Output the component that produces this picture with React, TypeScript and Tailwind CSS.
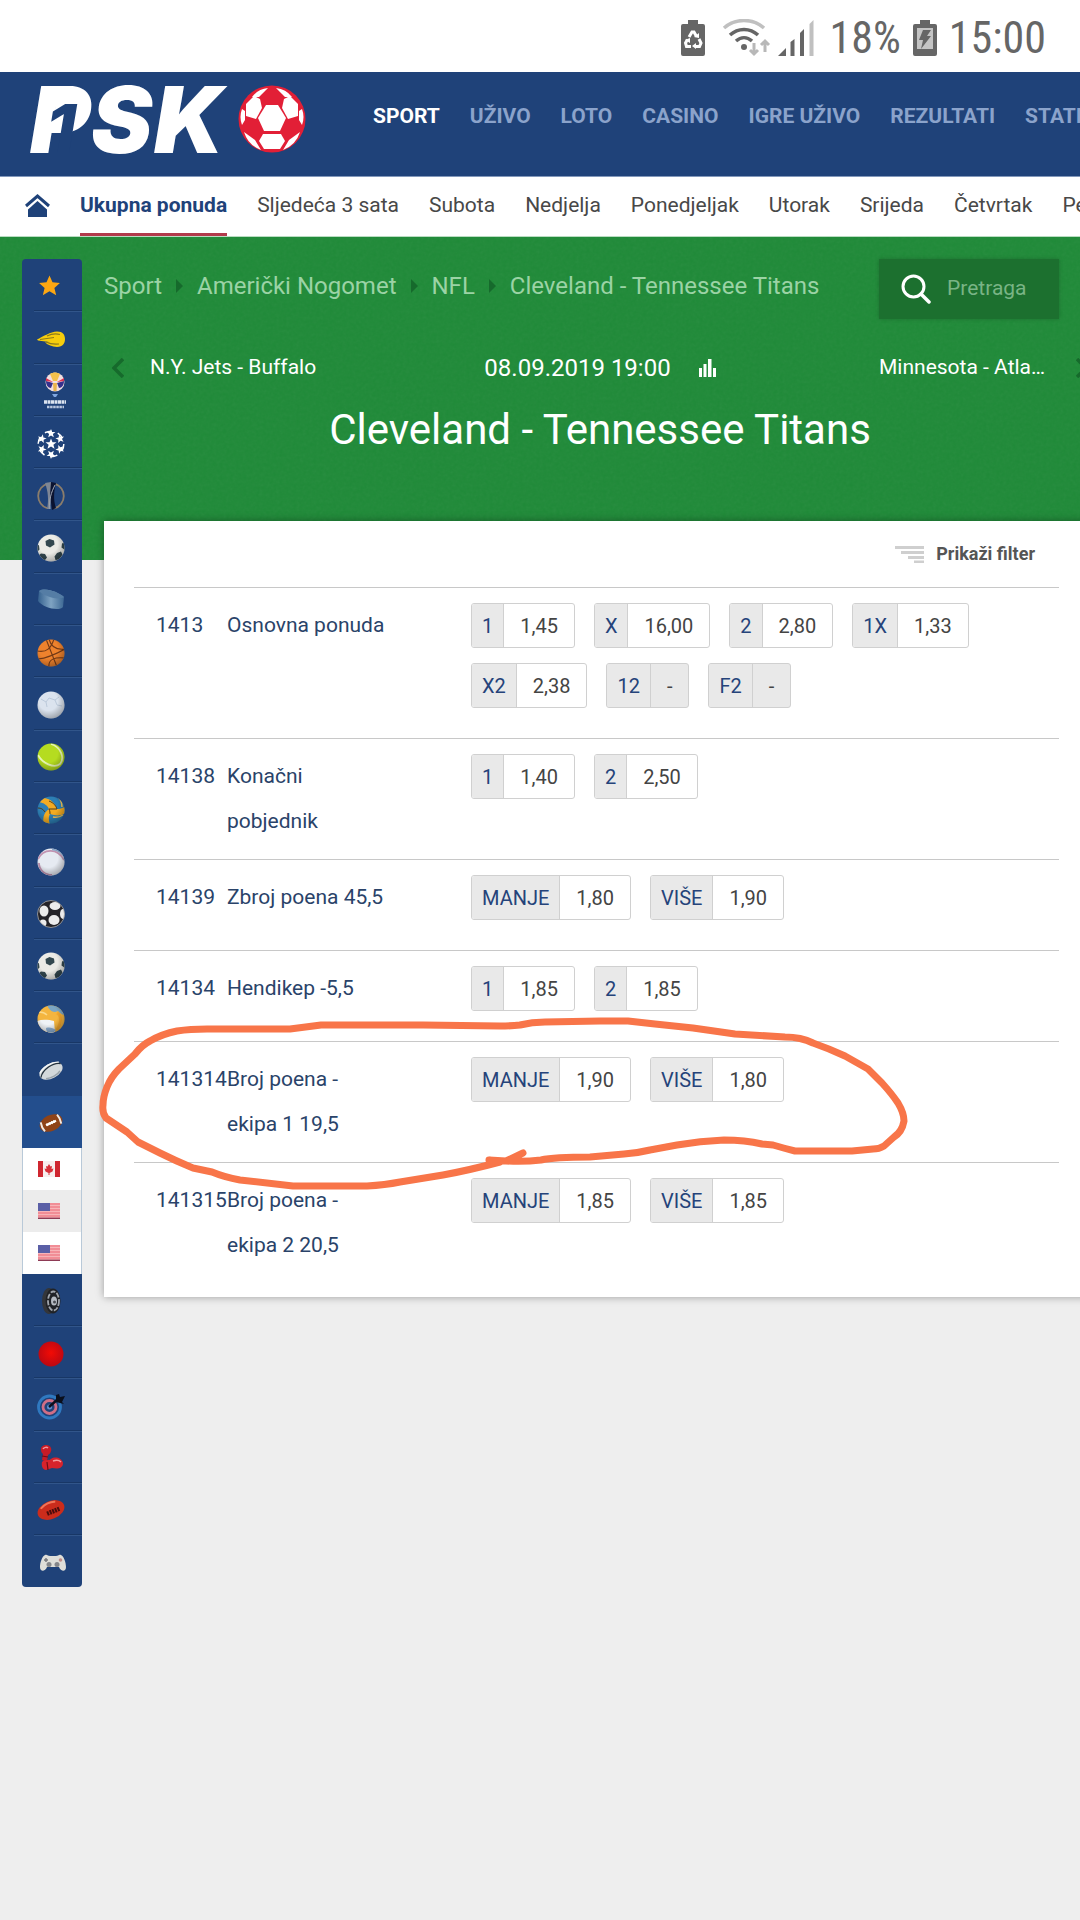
import type { ReactNode } from 'react';
import clsx from 'clsx';

const mainNav = ['SPORT', 'UŽIVO', 'LOTO', 'CASINO', 'IGRE UŽIVO', 'REZULTATI', 'STATISTIKA'];

const dayNav = ['Ukupna ponuda', 'Sljedeća 3 sata', 'Subota', 'Nedjelja', 'Ponedjeljak', 'Utorak', 'Srijeda', 'Četvrtak', 'Petak'];

const crumbs = ['Sport', 'Američki Nogomet', 'NFL', 'Cleveland - Tennessee Titans'];

type Odd = { tip: string; value: string };
type Market = { code: string; name: string; odds: Odd[] };

const markets: Market[] = [
  {
    code: '1413',
    name: 'Osnovna ponuda',
    odds: [
      { tip: '1', value: '1,45' },
      { tip: 'X', value: '16,00' },
      { tip: '2', value: '2,80' },
      { tip: '1X', value: '1,33' },
      { tip: 'X2', value: '2,38' },
      { tip: '12', value: '-' },
      { tip: 'F2', value: '-' },
    ],
  },
  { code: '14138', name: 'Konačni pobjednik', odds: [{ tip: '1', value: '1,40' }, { tip: '2', value: '2,50' }] },
  { code: '14139', name: 'Zbroj poena 45,5', odds: [{ tip: 'MANJE', value: '1,80' }, { tip: 'VIŠE', value: '1,90' }] },
  { code: '14134', name: 'Hendikep -5,5', odds: [{ tip: '1', value: '1,85' }, { tip: '2', value: '1,85' }] },
  { code: '141314', name: 'Broj poena - ekipa 1 19,5', odds: [{ tip: 'MANJE', value: '1,90' }, { tip: 'VIŠE', value: '1,80' }] },
  { code: '141315', name: 'Broj poena - ekipa 2 20,5', odds: [{ tip: 'MANJE', value: '1,85' }, { tip: 'VIŠE', value: '1,85' }] },
];

const Icon = ({ children }: { children: ReactNode }) => (
  <svg viewBox="0 0 28 28" className="h-7 w-7 overflow-visible" aria-hidden="true">{children}</svg>
);

const Gradients = () => (
  <svg className="absolute h-0 w-0" aria-hidden="true">
    <defs>
      <radialGradient id="shade" cx="0.4" cy="0.35" r="0.7">
        <stop offset="0.5" stopColor="#000" stopOpacity="0" />
        <stop offset="1" stopColor="#000" stopOpacity="0.3" />
      </radialGradient>
      <linearGradient id="puck" x1="0" x2="1">
        <stop offset="0" stopColor="#35618f" />
        <stop offset="0.5" stopColor="#7fa3c2" />
        <stop offset="1" stopColor="#3d6894" />
      </linearGradient>
      <radialGradient id="red" cx="0.5" cy="0.45" r="0.55">
        <stop offset="0" stopColor="#f30b05" />
        <stop offset="1" stopColor="#bb0812" />
      </radialGradient>
      <clipPath id="ballClip"><circle cx="14" cy="14" r="13.5" /></clipPath>
    </defs>
  </svg>
);

const StarIcon = () => (
  <Icon><path d="M12.500 3.500l3 6.700 7.400.700-5.500 5 1.800 7.300-6.700-3.900-6.700 3.900 1.800-7.300-5.500-5 7.400-.700z" fill="#fda712" /></Icon>
);

const CometIcon = () => (
  <Icon>
    <path d="M0 14.500C7 11 13 7 20 6.500c6 0 8 3.500 8 7.500s-2 8-8 8c-5-.5-9-2-12-4.500l4-.5L1 15.500z" fill="#f7cd0c" />
    <path d="M3 14.500l14-2M9 17c4 2 8 2.500 13 2M10 11c4-2 9-2.500 13-1.500" stroke="#8c7a1c" strokeWidth="1.200" fill="none" />
  </Icon>
);

const WorldCupIcon = () => (
  <svg viewBox="0 0 28 38" className="ml-1 h-[38px] w-7" aria-hidden="true">
    <circle cx="14" cy="10" r="9.500" fill="#f3dfe0" />
    <path d="M9 2c3-2 7-2 10 0l-3 7h-4z" fill="#f3c14b" />
    <path d="M5 9l7 2-2 5c-3 0-5-3-5-7zM23 9l-7 2 2 5c3 0 5-3 5-7z" fill="#36318c" />
    <path d="M5 6l7 4-7-1zM23 6l-7 4 7-1z" fill="#dc3452" />
    <path d="M12 11h4l-.5 8h-3z" fill="#eab44b" />
    <path d="M11 22h6l-2 3h-2z" fill="#7fa6e0" />
    <path d="M3 30h22" stroke="#dbe3f0" strokeWidth="3.500" strokeDasharray="3 .5" />
    <path d="M6 35h17" stroke="#b8c6de" strokeWidth="2.500" strokeDasharray="2.500 .6" />
  </svg>
);

const starPath = 'M0-4.500l1.200 3 3.200.100-2.500 2 .9 3.200L0 2l-2.800 1.800.9-3.200-2.500-2 3.200-.100z';

const ChampionsIcon = () => (
  <Icon>
    <g fill="#fff">
      <path d={starPath} transform="translate(14 14) scale(1.250)" />
      {[0, 60, 120, 180, 240, 300].map((a) => (
        <path key={a} d={starPath} transform={`rotate(${a} 14 14) translate(14 3.500)`} />
      ))}
    </g>
    <circle cx="14" cy="14" r="12.800" fill="none" stroke="#fff" strokeWidth="1.500" strokeDasharray="6.700 6.700" />
  </Icon>
);

const EuropaIcon = () => (
  <Icon>
    <circle cx="14" cy="14" r="12.800" fill="none" stroke="#8b7d6b" strokeWidth="1.800" strokeDasharray="33 7.200" strokeDashoffset="-24" />
    <path d="M8 1l6-1v13l-1 14h-3c2-9 1-18-2-26z" fill="#7d8695" />
    <path d="M14 0l5 1c-2 8-3 16 0 25l-4 2-2-15z" fill="#0b1330" />
    <path d="M18 3c-4 8-6 14-5 24" stroke="#a5acb8" fill="none" />
  </Icon>
);

const FootballIcon = () => (
  <Icon>
    <circle cx="14" cy="14" r="13.500" fill="#ebebe6" />
    <g clipPath="url(#ballClip)" fill="#33484f">
      <path d="M8.500 7l4-2 4.500 1.500.500 4-4.500 3-4-2z" />
      <path d="M0 10l2 1.500.500 4L0 18zM28 8l-3 1.500-.5 4L28 16zM4 19.500l4 .5 2 3.500L8 26H4l-3-4zM20 19l4-1.500 1.500 3-3 5-4 .5-1-3.500z" />
    </g>
    <circle cx="14" cy="14" r="13.500" fill="url(#shade)" />
  </Icon>
);

const PuckIcon = () => (
  <Icon>
    <path d="M2 5c6-4 19 1 25 6l-1 10c-4 5-21 0-25-6z" fill="url(#puck)" />
    <path d="M2 5c6-4 19 1 25 6-7 4-20-1-25-6z" fill="#557da5" />
  </Icon>
);

const BasketballIcon = () => (
  <Icon>
    <circle cx="14" cy="14" r="13.500" fill="#ee822d" />
    <g clipPath="url(#ballClip)" fill="none" stroke="#733a17" strokeWidth="1.100">
      <path d="M9 0l11 28M0 12c10 2 14-3 17-12M1 20c10-1 18-5 27-10M12 28c-1-8 6-10 16-9M12 0C14 8 20 11 28 10" />
    </g>
    <circle cx="14" cy="14" r="13.500" fill="url(#shade)" />
  </Icon>
);

const HandballIcon = () => (
  <Icon>
    <circle cx="14" cy="14" r="13.500" fill="#dbe3ee" />
    <path d="M4 8l5 3 3-4 6 2 4-3M9 11l1 5M18 9l2 5 5 1" stroke="#bccadb" fill="none" />
    <circle cx="14" cy="14" r="13.500" fill="url(#shade)" />
  </Icon>
);

const TennisIcon = () => (
  <Icon>
    <circle cx="14" cy="14" r="13.500" fill="#b5dc20" />
    <g clipPath="url(#ballClip)" fill="none" stroke="#e8f6b5" strokeWidth="1.800">
      <path d="M14 1c10 3 14 14 9 20-6 5-18-1-22-9" />
    </g>
    <circle cx="14" cy="14" r="13.500" fill="url(#shade)" />
  </Icon>
);

const VolleyballIcon = () => (
  <Icon>
    <circle cx="14" cy="14" r="13.500" fill="#2d7fb4" />
    <g clipPath="url(#ballClip)">
      <path d="M7 2C14 3 18 7 20 13c3 0 6-1 9-3v7c-5 3-10 3-16 1-2 4-1 7 0 11H7c-2-7 0-13 5-16C10 9 7 7 2 6z" fill="#f2ab22" />
      <path d="M12 13c3 0 5 0 8 0M12 13c1 2 1 4 1 5M12 5C17 7 19 10 20 13M1 12c3 0 5 1 7 4" fill="none" stroke="#503c1b" />
      <path d="M21 1c3 3 4 6 4 10M16 21c4 1 7 0 10-2" fill="none" stroke="#f5c355" strokeWidth="1.500" />
    </g>
    <circle cx="14" cy="14" r="13.500" fill="url(#shade)" />
  </Icon>
);

const BaseballIcon = () => (
  <Icon>
    <circle cx="14" cy="14" r="13.500" fill="#e6eaf2" />
    <g clipPath="url(#ballClip)" fill="none">
      <path d="M1 11C6 1 20-1 27 12M2 15c0 7 6 12 13 12" stroke="#c193b1" strokeWidth="1.800" />
      <path d="M15 1c6 0 12 4 13 10" stroke="#8ba6c8" strokeWidth="2.500" />
    </g>
    <circle cx="14" cy="14" r="13.500" fill="url(#shade)" />
  </Icon>
);

const FutsalIcon = () => (
  <Icon>
    <circle cx="14" cy="14" r="13.500" fill="#242328" />
    <g clipPath="url(#ballClip)" fill="#ececec">
      <ellipse cx="18" cy="6" rx="5.500" ry="4" />
      <ellipse cx="7" cy="11" rx="4.500" ry="5.500" />
      <ellipse cx="17" cy="20" rx="5.500" ry="5" />
      <ellipse cx="26" cy="14" rx="3" ry="5" />
      <ellipse cx="6" cy="23" rx="3.500" ry="3.500" />
    </g>
    <circle cx="14" cy="14" r="13.500" fill="none" stroke="#a9a9a9" strokeWidth="0.800" />
  </Icon>
);

const BeachVolleyIcon = () => (
  <Icon>
    <circle cx="14" cy="14" r="13.500" fill="#f4b53f" />
    <g clipPath="url(#ballClip)">
      <path d="M10 0h18v10c-3 0-5-2-7-4-4 2-8 1-11-6z" fill="#7ba6c4" />
      <path d="M0 16c6-2 12-1 17 0l1 12H4z" fill="#eff3f7" />
      <path d="M9 23c4-1 7 0 10 2l-4 4c-4 0-6-3-6-6z" fill="#8fb2d6" />
      <path d="M20 8c5 3 4 10 0 17" fill="none" stroke="#f0a52c" strokeWidth="3" />
      <path d="M2 7c3 0 6 1 8 3" fill="none" stroke="#fbd98a" strokeWidth="1.500" />
    </g>
    <circle cx="14" cy="14" r="13.500" fill="url(#shade)" />
  </Icon>
);

const RugbyIcon = () => (
  <Icon>
    <g transform="rotate(-28 14 14)">
      <ellipse cx="14" cy="14" rx="12.500" ry="7.500" fill="#d3d8db" />
      <path d="M3 11c5-4 16-5 22-1" stroke="#f4f6f7" strokeWidth="1.500" fill="none" />
      <path d="M2 15c5-6 18-8 24-3" stroke="#24313c" strokeWidth="1.300" fill="none" />
      <path d="M6 18.500c5 2 12 2 16-.5" stroke="#9aa3aa" strokeWidth="1.500" fill="none" />
    </g>
  </Icon>
);

const AmericanIcon = () => (
  <Icon>
    <g transform="rotate(-25 14 14)">
      <ellipse cx="14" cy="14" rx="12" ry="8" fill="#8f4318" />
      <path d="M5 9q-1.500 5 0 10M23 9q1.500 5 0 10" stroke="#f1e9e2" strokeWidth="2" fill="none" />
      <path d="M8.500 14h11" stroke="#fff" strokeWidth="2.200" />
      <path d="M10 12.500v3M12.500 12.500v3M15 12.500v3M17.500 12.500v3" stroke="#fff" strokeWidth="1" />
    </g>
  </Icon>
);

const TyreIcon = () => (
  <Icon>
    <ellipse cx="12" cy="14" rx="7" ry="13" fill="#34363a" />
    <ellipse cx="16" cy="14" rx="7.500" ry="12.500" fill="#202226" />
    <ellipse cx="16.500" cy="14" rx="5.500" ry="9.500" fill="none" stroke="#a1a6ad" strokeWidth="1.800" strokeDasharray="5 1.500" />
    <ellipse cx="17" cy="14" rx="3" ry="4.500" fill="#b6bbc2" />
    <circle cx="17.500" cy="15" r="1.500" fill="#4a4d52" />
  </Icon>
);

const RedBallIcon = () => (
  <Icon><circle cx="14" cy="14" r="12.500" fill="url(#red)" /></Icon>
);

const DartsIcon = () => (
  <Icon>
    <circle cx="12.500" cy="15" r="11" fill="none" stroke="#2f79c0" strokeWidth="2.800" />
    <circle cx="12.500" cy="15" r="6.500" fill="none" stroke="#cf6e86" strokeWidth="2.800" />
    <circle cx="12.500" cy="15" r="2.500" fill="#5f8fd0" />
    <path d="M12 15l9-8" stroke="#0a0f1c" strokeWidth="2.500" />
    <path d="M19 3l3-1 1 3 5-1-3 6 2 2-8-2z" fill="#0a0f1c" />
  </Icon>
);

const BoxingIcon = () => (
  <Icon>
    <path d="M4 6c-1-5 8-7 10-2 1 3-1 6-3 7l-1 7-5-2 1-6c-1-1-2-2-2-4z" fill="#c81b26" />
    <path d="M5 18c3-3 7-1 9-3 4-3 11-1 12 4 0 6-6 6-11 5l-6 2c-3 0-5-4-4-8z" fill="#d7232c" />
    <path d="M6 5c1-2 4-2 5-1M16 17c3-1 6-1 8 1" stroke="#f49a9c" fill="none" strokeWidth="1.500" />
    <path d="M10 18l1 8M5 12l6 1" stroke="#6c0d16" fill="none" strokeWidth="1.200" />
  </Icon>
);

const AussieIcon = () => (
  <Icon>
    <g transform="rotate(-22 14 14)">
      <ellipse cx="14" cy="14" rx="14" ry="9" fill="#cb2c1c" />
      <path d="M5 9c5-3 12-3 16-1" stroke="#f07558" strokeWidth="2" fill="none" />
      <path d="M9 16h14" stroke="#4b0c0c" strokeWidth="4.500" strokeDasharray="2 .8" />
    </g>
  </Icon>
);

const GamepadIcon = () => (
  <Icon>
    <g transform="translate(2 1)">
      <path d="M6 6c2-1 3 1 5 1h6c2 0 3-2 5-1 3 1 5 8 5 12 0 5-5 5-7 0H8c-2 5-7 5-7 0C1 14 3 7 6 6z" fill="#deded9" />
      <circle cx="10" cy="15.500" r="2.500" fill="#84868a" />
      <circle cx="18" cy="15.500" r="2.500" fill="#84868a" />
      <path d="M5 11h4M7 9v4" stroke="#77797e" strokeWidth="1.500" />
      <circle cx="21.500" cy="11" r="1.800" fill="#c08c87" />
    </g>
  </Icon>
);

const CanadaFlag = () => (
  <svg viewBox="0 0 22 16" className="h-4 w-[22px]" aria-hidden="true">
    <path d="M0 0h22v16H0z" fill="#f7eeee" />
    <path d="M0 0h5v16H0zM17 0h5v16h-5z" fill="#cf2630" />
    <path d="M11 3l1.500 2.500 1.500-.5-.5 3 2-.5-1 3-3 1.500V14h-1v-2L7.500 10.500l-1-3 2 .5-.5-3 1.500.5z" fill="#d8303a" />
  </svg>
);

const UsaFlag = () => (
  <svg viewBox="0 0 22 16" className="h-4 w-[22px]" aria-hidden="true">
    <path d="M0 0h22v16H0z" fill="#f7b4b8" />
    <path d="M0 1h22M0 4h22M0 7h22M0 10h22M0 13h22" stroke="#f0808a" strokeWidth="1.400" />
    <path d="M0 15.300h22" stroke="#8d3a55" strokeWidth="1.400" />
    <path d="M0 0h12v8H0z" fill="#5a5fa6" />
  </svg>
);

const topSports = [
  { name: 'Favoriti', icon: <StarIcon /> },
  { name: 'Specijali', icon: <CometIcon /> },
  { name: 'FIBA World Cup', icon: <WorldCupIcon /> },
  { name: 'Liga prvaka', icon: <ChampionsIcon /> },
  { name: 'Europska liga', icon: <EuropaIcon /> },
  { name: 'Nogomet', icon: <FootballIcon /> },
  { name: 'Hokej', icon: <PuckIcon /> },
  { name: 'Košarka', icon: <BasketballIcon /> },
  { name: 'Rukomet', icon: <HandballIcon /> },
  { name: 'Tenis', icon: <TennisIcon /> },
  { name: 'Odbojka', icon: <VolleyballIcon /> },
  { name: 'Baseball', icon: <BaseballIcon /> },
  { name: 'Futsal', icon: <FutsalIcon /> },
  { name: 'Mali nogomet', icon: <FootballIcon /> },
  { name: 'Odbojka na pijesku', icon: <BeachVolleyIcon /> },
  { name: 'Ragbi', icon: <RugbyIcon /> },
  { name: 'Američki Nogomet', icon: <AmericanIcon />, active: true },
];

const leagues = [
  { name: 'CFL', icon: <CanadaFlag /> },
  { name: 'NFL', icon: <UsaFlag />, active: true },
  { name: 'NCAA', icon: <UsaFlag /> },
];

const bottomSports = [
  { name: 'Auto moto', icon: <TyreIcon /> },
  { name: 'Snooker', icon: <RedBallIcon /> },
  { name: 'Pikado', icon: <DartsIcon /> },
  { name: 'Boks', icon: <BoxingIcon /> },
  { name: 'Australski nogomet', icon: <AussieIcon /> },
  { name: 'E-Sport', icon: <GamepadIcon /> },
];

const SportLink = ({ name, icon, active, first }: { name: string; icon: ReactNode; active?: boolean; first?: boolean }) => (
  <a href="#" aria-label={name} className={clsx('flex', active ? 'bg-[#234e8d]' : 'pl-3')}>
    <span
      className={clsx(
        'flex flex-1 items-center pt-0.5',
        active ? 'pl-[15px]' : 'pl-[3px]',
        !first && !active && 'border-t border-[#31558a] shadow-[0_-1px_0_#183766]'
      )}
    >
      {icon}
    </span>
  </a>
);

const Sidebar = () => (
  <nav aria-label="Sportovi" className="w-[60px] shrink-0 self-start overflow-hidden rounded-[4px] bg-[#1f4279]">
    <div className="grid h-[889px] auto-rows-fr">
      {topSports.map((s, i) => <SportLink key={s.name} {...s} first={i === 0} />)}
    </div>
    {leagues.map((l) => (
      <a key={l.name} href="#" aria-label={l.name} className={clsx('flex h-[42px] items-center border-x border-[#b9c9d8] pl-[15px]', l.active ? 'bg-[#ececec]' : 'bg-white')}>
        {l.icon}
      </a>
    ))}
    <div className="grid h-[313px] auto-rows-fr">
      {bottomSports.map((s, i) => <SportLink key={s.name} {...s} first={i === 0} />)}
    </div>
  </nav>
);

const StatusBar = () => (
  <div className="flex h-[72px] items-center justify-end bg-white pt-1 pr-[34px] text-[#666]">
    <svg viewBox="0 0 24 36" className="h-9 w-6" aria-hidden="true">
      <path d="M7 0h10v4h5q2 0 2 2v28q0 2-2 2H2q-2 0-2-2V6q0-2 2-2h5z" fill="#666" />
      <g fill="none" stroke="#fff" strokeWidth="3">
        <path d="M8 17l3-5h2l2.500 4.500M18 19l2 4-1.500 3.500H14M10 26.500H5.500L4.500 23l2-3.500" />
      </g>
      <path d="M13 17l5 1V13zM15 23v6l-4-3zM4 20l5-2v5z" fill="#fff" />
    </svg>
    <svg viewBox="0 0 50 38" className="ml-[17px] h-[38px] w-[50px]" aria-hidden="true">
      <g fill="none" strokeWidth="3.500">
        <path d="M2 9C13-1 31-1 42 9" stroke="#c0c0c0" />
        <path d="M8 16c8-7.500 20-7.500 28 0M14 22c5-4.500 11-4.500 16 0" stroke="#666" />
        <path d="M32 24v11M28 31l4 4 4-4M43 33V22M39 26l4-4 4 4" stroke="#b8b8b8" strokeWidth="3" />
      </g>
      <circle cx="22" cy="28" r="3" fill="#666" />
    </svg>
    <svg viewBox="0 0 36 36" className="ml-1.5 h-9 w-9" aria-hidden="true">
      <path d="M0 36l8-8v8zM12.500 36V22l4-3v17zM22 36V13l4-4v27z" fill="#666" />
      <path d="M31.500 36V4l4-4v36z" fill="#c0c0c0" />
    </svg>
    <span className="ml-4 font-['Roboto_Condensed','Liberation_Sans_Narrow',Roboto,sans-serif] text-[44px] leading-none">18%</span>
    <svg viewBox="0 0 24 36" className="ml-3 h-9 w-6" aria-hidden="true">
      <path d="M7 0h10v4h5q2 0 2 2v28q0 2-2 2H2q-2 0-2-2V6q0-2 2-2h5z" fill="#666" />
      <path d="M4 8h16v21H4z" fill="#c4c4c4" />
      <path d="M10 10h8l-4 6h4L8 29l2-9H6z" fill="#666" />
    </svg>
    <span className="ml-3 font-['Roboto_Condensed','Liberation_Sans_Narrow',Roboto,sans-serif] text-[44px] leading-none">15:00</span>
  </div>
);

const Logo = () => (
  <svg viewBox="0 0 280 72" className="h-[72px] w-[280px] overflow-visible" role="img" aria-label="PSK">
    <g fill="#fff" fontFamily="Inter, sans-serif" fontWeight="900" fontStyle="italic" fontSize="92">
      <text x="0" y="70">P</text>
      <text x="61" y="70">S</text>
      <text x="124" y="70">K</text>
    </g>
    <path d="M26 14h24l-5 26H24z" fill="#fff" />
    <text x="16" y="70" fill="#1f4279" fontFamily="Inter, sans-serif" fontWeight="800" fontStyle="italic" fontSize="68">1</text>
    <g transform="translate(242 36)">
      <circle r="33.500" fill="#e21f36" />
      <g fill="#fff">
        <path d="M-6-14H6l8 13-6 13H-8L-14-1z" />
        <path d="M-12-20l-6-3-8 8v12l10 3 6-11z" />
        <path d="M12-20l6-3 8 8v12L16 0 10-11z" />
        <path d="M-9 15H9l4 7-5 8H-8l-5-8z" />
        <path d="M-4-31l-9 9-7 0q6-8 16-9zM4-31l9 9h7q-6-8-16-9z" />
        <path d="M-30 -10q-3 8 0 16l3-5v-9zM30-10q3 8 0 16l-3-5v-9z" />
        <path d="M-28 13l11 8 6 10q-13-5-17-18zM28 13l-11 8-6 10q13-5 17-18z" />
      </g>
    </g>
  </svg>
);

const OddButton = ({ tip, value }: Odd) => (
  <button type="button" className={clsx('flex h-[45px] items-stretch overflow-hidden rounded-[3px] border border-[#d0d0d0] text-xl', value === '-' ? 'bg-[#e9e9e9]' : 'bg-white')}>
    <span className="flex items-center border-r border-[#d0d0d0] bg-[#e9e9e9] px-2.5 text-[#25437a]">{tip}</span>
    <span className="flex items-center px-4 text-[#444]">{value}</span>
  </button>
);

const MarketTable = () => (
  <table className="w-full table-fixed border-collapse text-[21px] leading-[45px]">
    <colgroup>
      <col className="w-[93px]" />
      <col className="w-[244px]" />
      <col />
    </colgroup>
    <tbody>
      {markets.map((m) => (
        <tr key={m.code} className="border-t border-[#c8c8c8] align-top text-[#2a4369]">
          <td className="py-[15px] pl-[22px] whitespace-nowrap">{m.code}</td>
          <td className="py-[15px] pr-[84px]">{m.name}</td>
          <td className="pt-[15px] pb-[30px]">
            <div className="flex flex-wrap gap-x-[19px] gap-y-[15px]">
              {m.odds.map((o) => <OddButton key={o.tip} {...o} />)}
            </div>
          </td>
        </tr>
      ))}
    </tbody>
  </table>
);

// freehand marker loop round the 141314 row
const MarkerLoop = () => (
  <svg viewBox="104 521 976 776" className="pointer-events-none absolute top-0 left-0 h-[776px] w-[976px] overflow-visible" aria-hidden="true">
    <path
      d="M523 1153L506 1161L489 1160L500 1162Q470 1170 443 1175L400 1182Q385 1185 367 1186H293L240 1180Q224 1177 212 1172L193 1168Q176 1161 160 1153L138 1142L127 1132L106 1118Q102 1113 103 1105Q103 1097 107 1087Q111 1077 119 1069L135 1054Q142 1045 150 1041Q162 1034 177 1031Q190 1029 207 1029H290L321 1025H423L500 1026Q512 1026 520 1025Q532 1022 545 1022L600 1021H628L655 1024L693 1028L735 1034L785 1037Q801 1037 813 1043Q830 1049 845 1056L868 1069L882 1083Q892 1094 898 1103Q904 1113 904 1121Q902 1132 894 1137L884 1146Q879 1149 873 1149L852 1151H795Q783 1148 773 1145L762 1144Q745 1140 724 1140Q700 1141 677 1145L650 1150Q638 1153 624 1154L590 1157Q554 1157 541 1160Q525 1162 506 1161"
      fill="none"
      stroke="#f87549"
      strokeWidth="7"
      strokeLinecap="round"
      strokeLinejoin="round"
    />
  </svg>
);

const Chevron = ({ flip }: { flip?: boolean }) => (
  <svg viewBox="0 0 12 20" className={clsx('h-5 w-3 shrink-0', flip && 'rotate-180')} aria-hidden="true">
    <path d="M11 1L2 10l9 9" fill="none" stroke="#166a2c" strokeWidth="3.500" />
  </svg>
);

const App = () => (
  <div className="min-h-screen w-full overflow-hidden bg-[#eeeeee] font-[Roboto,'Noto_Sans',sans-serif]">
    <Gradients />
    <StatusBar />

    <header className="flex h-[105px] border-b border-[#8298bb] bg-[#1f4279]">
      <div className="w-[373px] shrink-0 pt-[11px] pl-[30px]"><Logo /></div>
      <nav aria-label="Glavni izbornik" className="flex h-[90px] items-center gap-[30px] text-[21px] font-bold whitespace-nowrap">
        {mainNav.map((item, i) => (
          <a key={item} href="#" className={i === 0 ? 'text-white' : 'text-[#8ba3cb]'}>{item}</a>
        ))}
      </nav>
    </header>

    <nav aria-label="Dani" className="flex h-[60px] items-stretch gap-[30px] border-b border-[#b9dcc1] bg-white text-[21px] whitespace-nowrap text-[#484848]">
      <a href="#" aria-label="Početna" className="ml-[25px] flex w-[27px] items-center pb-0.5">
        <svg viewBox="0 0 25 23" className="h-[23px] w-[25px] shrink-0" aria-hidden="true">
          <path d="M1 12L12.500 2 24 12" fill="none" stroke="#1f4279" strokeWidth="3" />
          <path d="M12.500 7L22 15.500V23H3v-7.500z" fill="#1f4279" />
        </svg>
      </a>
      {dayNav.map((day, i) => (
        <a key={day} href="#" className={clsx('flex items-center border-b-[3px] pt-0.5', i === 0 ? 'border-[#b23a4b] font-bold text-[#1f4279]' : 'border-transparent')}>
          {day}
        </a>
      ))}
    </nav>

    <div className="relative">
      <div className="absolute inset-x-0 top-0 h-[323px] bg-[#1f8a38]">
        {/* grass */}
        <svg className="h-full w-full opacity-5" aria-hidden="true">
          <filter id="grass">
            <feTurbulence type="fractalNoise" baseFrequency="0.3" numOctaves="2" />
            <feColorMatrix type="saturate" values="0" />
          </filter>
          <rect width="100%" height="100%" filter="url(#grass)" />
        </svg>
      </div>

      <div className="relative flex gap-[22px] pt-[22px] pl-[22px]">
        <Sidebar />

        <main className="-mr-4 min-w-0 flex-1">
          <div className="flex h-[60px] items-center justify-between pr-[37px]">
            <nav aria-label="Putanja" className="flex items-center pb-1.5 text-2xl whitespace-nowrap text-[#9bd3a5]">
              {crumbs.map((c, i) => (
                <span key={c} className="flex items-center">
                  {i > 0 && (
                    <svg viewBox="0 0 7 14" className="mx-3.5 h-3.5 w-[7px]" aria-hidden="true"><path d="M0 0l7 7-7 7z" fill="#166a2c" /></svg>
                  )}
                  <a href="#">{c}</a>
                </span>
              ))}
            </nav>
            <label className="flex h-[60px] w-[180px] items-center gap-4 bg-[#1c702f] pl-[22px] shadow-[0_0_4px_rgba(0,0,0,0.2)]">
              <svg viewBox="0 0 30 30" className="h-[30px] w-[30px] shrink-0" aria-hidden="true">
                <circle cx="12.500" cy="12.500" r="10.500" fill="none" stroke="#fff" strokeWidth="3" />
                <path d="M20 20l8 8" stroke="#fff" strokeWidth="3.500" strokeLinecap="round" />
              </svg>
              <input type="text" aria-label="Pretraga" placeholder="Pretraga" className="w-24 bg-transparent text-[21px] text-white outline-none placeholder:text-[#79b485]" />
            </label>
          </div>

          <div className="mt-6 flex h-[50px] items-center justify-between px-2 text-[21px] text-white">
            <a href="#" className="flex w-[209px] items-center gap-[26px]">
              <Chevron />
              <span className="truncate">N.Y. Jets - Buffalo</span>
            </a>
            <div className="flex items-center gap-7 text-2xl">
              <time dateTime="2019-09-08T19:00">08.09.2019 19:00</time>
              <svg viewBox="0 0 17 18" className="h-[18px] w-[17px]" aria-hidden="true">
                <path d="M0 9h3v9H0zM4.500 5h3v13h-3zM9 0h3.500v18H9zM14 9h3v9h-3z" fill="#fff" />
              </svg>
            </div>
            <a href="#" className="flex w-[209px] items-center justify-between">
              <span className="w-[168px] truncate">Minnesota - Atlanta</span>
              <Chevron flip />
            </a>
          </div>

          <h1 className="mb-[54px] text-center text-[42px] leading-[74px] text-white">Cleveland - Tennessee Titans</h1>

          <section className="relative bg-white pr-[37px] pb-3.5 pl-[30px] shadow-[0_0_8px_rgba(0,0,0,0.35)]">
            <div className="flex h-[66px] items-center justify-end pr-6">
              <button type="button" className="flex items-center gap-3 text-lg font-bold text-[#555]">
                <svg viewBox="0 0 29 17" className="h-[17px] w-[29px]" aria-hidden="true">
                  <path d="M0 1.500h29M6 6.500h23M13 11.500h16M19 16h10" stroke="#cfcfcf" strokeWidth="3" />
                </svg>
                Prikaži filter
              </button>
            </div>
            <MarketTable />
            <MarkerLoop />
          </section>
        </main>
      </div>
    </div>
  </div>
);

export default App;
